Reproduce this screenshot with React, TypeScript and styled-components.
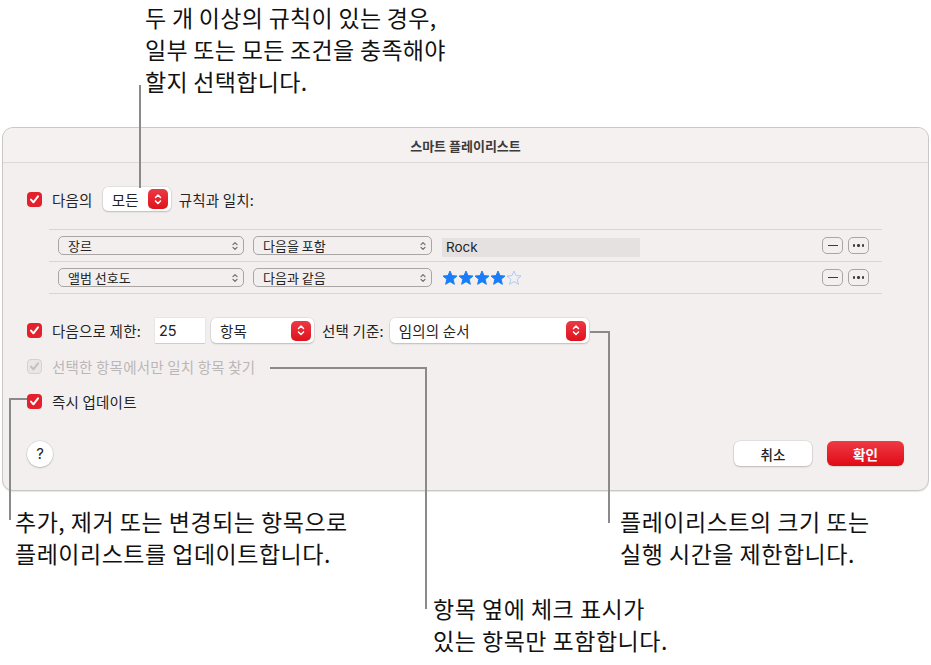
import React from "react";
import styled, { createGlobalStyle } from "styled-components";

const FONT = `"Noto Sans CJK KR", "Noto Sans", sans-serif`;
const LATIN = `Inter, "Noto Sans CJK KR", sans-serif`;
const RED = "#e3202b";

const GlobalStyle = createGlobalStyle`
  html, body {
    margin: 0;
    padding: 0;
    background: #ffffff;
  }
  body {
    font-family: ${FONT};
    color: #1d1d1f;
  }
`;

const Page = styled.div`
  position: relative;
  width: 931px;
  height: 665px;
  overflow: hidden;
  background: #ffffff;
`;

const TopNote = styled.p`
  margin: 0 0 0 145px;
  padding-top: 1px;
  height: 126px;
  font-size: 23px;
  letter-spacing: 0.3px;
  line-height: 32px;
  color: #111;
`;

const Note = styled.p<{ $x: number; $y: number }>`
  position: absolute;
  left: ${(p) => p.$x}px;
  top: ${(p) => p.$y}px;
  margin: 0;
  font-size: 23px;
  letter-spacing: 0.5px;
  line-height: 32px;
  color: #111;
  white-space: nowrap;
`;

const VLine = styled.div<{ $x: number; $y: number; $len: number }>`
  position: absolute;
  left: ${(p) => p.$x}px;
  top: ${(p) => p.$y}px;
  width: 2px;
  height: ${(p) => p.$len}px;
  background: #8a8a8a;
  z-index: 5;
`;

const HLine = styled.div<{ $x: number; $y: number; $len: number }>`
  position: absolute;
  left: ${(p) => p.$x}px;
  top: ${(p) => p.$y}px;
  height: 2px;
  width: ${(p) => p.$len}px;
  background: #8a8a8a;
  z-index: 5;
`;

const Dialog = styled.div`
  margin-left: 2px;
  width: 927px;
  box-sizing: border-box;
  border: 1px solid #cbc7c7;
  border-radius: 11px;
  background: #f4efef;
  box-shadow: 0 1px 1px rgba(0, 0, 0, 0.1);
`;

const TitleBar = styled.div`
  height: 34px;
  border-bottom: 1px solid #ddd8d8;
  display: flex;
  align-items: center;
  justify-content: center;
  font-size: 13px;
  font-weight: 700;
  color: #3b3b3b;
  background: #f6f1f1;
  border-radius: 10px 10px 0 0;
`;

const Body = styled.div`
  padding: 24px 24px 24px 24px;
`;

const Row = styled.div<{ $h: number; $mt?: number }>`
  display: flex;
  align-items: center;
  height: ${(p) => p.$h}px;
  margin-top: ${(p) => p.$mt ?? 0}px;
`;

const Label = styled.span<{ $ml?: number; $muted?: boolean }>`
  font-size: 14.5px;
  letter-spacing: 0.2px;
  margin-left: ${(p) => p.$ml ?? 0}px;
  color: ${(p) => (p.$muted ? "#bab6b6" : "#232323")};
  white-space: nowrap;
`;

const Box = styled.span<{ $disabled?: boolean }>`
  width: 15px;
  height: 15px;
  box-sizing: border-box;
  border-radius: 4px;
  margin-right: 10px;
  flex: none;
  display: flex;
  align-items: center;
  justify-content: center;
  background: ${(p) => (p.$disabled ? "#ebe6e6" : RED)};
  border: ${(p) => (p.$disabled ? "1px solid #d6d1d1" : "none")};
`;

const Checkbox = ({ disabled }: { disabled?: boolean }) => (
  <Box $disabled={disabled}>
    <svg width="11" height="11" viewBox="0 0 11 11">
      <path
        d="M2 5.6 L4.4 8.3 L9 2.4"
        fill="none"
        stroke={disabled ? "#c3bfbf" : "#ffffff"}
        strokeWidth="2"
        strokeLinecap="round"
        strokeLinejoin="round"
      />
    </svg>
  </Box>
);

const Popup = styled.div<{ $w: number; $ml?: number; $h?: number }>`
  width: ${(p) => p.$w}px;
  height: ${(p) => p.$h ?? 25}px;
  margin-left: ${(p) => p.$ml ?? 0}px;
  box-sizing: border-box;
  flex: none;
  display: flex;
  align-items: center;
  justify-content: space-between;
  padding: 0 3px 0 9px;
  background: #ffffff;
  border-radius: 5px;
  box-shadow: 0 0 0 0.5px rgba(0, 0, 0, 0.12), 0 1px 2px rgba(0, 0, 0, 0.16);
  font-size: 14.5px;
  letter-spacing: 0.2px;
  color: #232323;
`;

const Stepper = styled.span`
  width: 20px;
  height: 20px;
  border-radius: 5px;
  background: linear-gradient(#ec3a44, #df111c);
  display: flex;
  align-items: center;
  justify-content: center;
`;

const Chevrons = ({ color, size }: { color: string; size: number }) => (
  <svg width={size} height={size * 1.25} viewBox="0 0 12 15">
    <path
      d="M3 5.5 L6 2.5 L9 5.5 M3 9.5 L6 12.5 L9 9.5"
      fill="none"
      stroke={color}
      strokeWidth="1.8"
      strokeLinecap="round"
      strokeLinejoin="round"
    />
  </svg>
);

const RulesBox = styled.div`
  margin: 18px 0 0 22px;
  width: 833px;
  border-top: 1px solid #d9d4d4;
`;

const RuleRow = styled.div`
  height: 31px;
  border-bottom: 1px solid #d9d4d4;
  display: flex;
  align-items: center;
  padding: 0 13px 0 9px;
`;

const Select = styled.div<{ $w: number; $mr: number }>`
  width: ${(p) => p.$w}px;
  height: 19px;
  margin-right: ${(p) => p.$mr}px;
  box-sizing: border-box;
  flex: none;
  border: 1px solid #a9a5a5;
  border-radius: 5px;
  display: flex;
  align-items: center;
  justify-content: space-between;
  padding: 0 4px 0 9px;
  font-size: 13px;
  color: #232323;
`;

const ValueField = styled.div`
  width: 198px;
  height: 19px;
  margin-top: 3px;
  background: #e6e1e1;
  padding-left: 4px;
  box-sizing: border-box;
  display: flex;
  align-items: center;
  font-family: ${LATIN};
  font-size: 13.5px;
  color: #232323;
`;

const Stars = styled.div`
  display: flex;
  width: 198px;
`;

const Spacer = styled.div`
  flex: 1;
`;

const SmallButton = styled.div<{ $ml?: number }>`
  width: 21px;
  height: 17px;
  margin-left: ${(p) => p.$ml ?? 0}px;
  box-sizing: border-box;
  border: 1px solid #a9a5a5;
  border-radius: 5px;
  display: flex;
  align-items: center;
  justify-content: center;
  gap: 2px;
`;

const Dash = styled.span`
  width: 10px;
  height: 1.5px;
  background: #3a3a3a;
`;

const Dot = styled.span`
  width: 2.5px;
  height: 2.5px;
  border-radius: 50%;
  background: #3a3a3a;
`;

const NumberField = styled.div`
  width: 50px;
  height: 25px;
  margin-left: 14px;
  box-sizing: border-box;
  padding-left: 4px;
  background: #ffffff;
  box-shadow: 0 0 0 0.5px rgba(0, 0, 0, 0.08), 0 1px 0 rgba(0, 0, 0, 0.1);
  display: flex;
  align-items: center;
  font-family: ${LATIN};
  font-size: 14.5px;
  color: #232323;
`;

const Footer = styled.div`
  display: flex;
  align-items: center;
  height: 25px;
  margin-top: 30px;
  gap: 15px;
`;

const Help = styled.div`
  width: 26px;
  height: 26px;
  border-radius: 50%;
  background: #ffffff;
  box-shadow: 0 0 0 0.5px rgba(0, 0, 0, 0.12), 0 1px 2px rgba(0, 0, 0, 0.18);
  display: flex;
  align-items: center;
  justify-content: center;
  font-family: ${LATIN};
  font-size: 15px;
  color: #222;
  margin-right: auto;
`;

const Button = styled.div<{ $primary?: boolean; $w: number }>`
  width: ${(p) => p.$w}px;
  height: 25px;
  border-radius: 6px;
  display: flex;
  align-items: center;
  justify-content: center;
  font-size: 13.5px;
  font-weight: ${(p) => (p.$primary ? 700 : 500)};
  color: ${(p) => (p.$primary ? "#ffffff" : "#222222")};
  background: ${(p) =>
    p.$primary ? "linear-gradient(#ef3a44, #df0b16)" : "#ffffff"};
  box-shadow: ${(p) =>
    p.$primary
      ? "0 1px 1px rgba(0,0,0,0.12)"
      : "0 0 0 0.5px rgba(0,0,0,0.12), 0 1px 2px rgba(0,0,0,0.18)"};
`;

const Star = ({ filled }: { filled: boolean }) => (
  <svg width="16" height="16" viewBox="0 0 24 24">
    <polygon
      points="12,1.5 15,8.4 22.5,9 16.8,14 18.6,21.5 12,17.5 5.4,21.5 7.2,14 1.5,9 9,8.4"
      fill={filled ? "#1a7cf6" : "none"}
      stroke={filled ? "#1a7cf6" : "#a8c8f4"}
      strokeWidth="1.4"
      strokeLinejoin="round"
    />
  </svg>
);

const rating = 4;

export default function App() {
  return (
    <Page>
      <GlobalStyle />
      <TopNote>
        두 개 이상의 규칙이 있는 경우,
        <br />
        일부 또는 모든 조건을 충족해야
        <br />
        할지 선택합니다.
      </TopNote>

      <Dialog>
        <TitleBar>스마트 플레이리스트</TitleBar>
        <Body>
          <Row $h={24}>
            <Checkbox />
            <Label>다음의</Label>
            <Popup $w={68} $ml={10} $h={24}>
              모든
              <Stepper>
                <Chevrons color="#fff" size={10} />
              </Stepper>
            </Popup>
            <Label $ml={8}>규칙과 일치:</Label>
          </Row>

          <RulesBox>
            <RuleRow>
              <Select $w={186} $mr={9}>
                장르
                <Chevrons color="#6f6b6b" size={8} />
              </Select>
              <Select $w={179} $mr={10}>
                다음을 포함
                <Chevrons color="#6f6b6b" size={8} />
              </Select>
              <ValueField>Rock</ValueField>
              <Spacer />
              <SmallButton>
                <Dash />
              </SmallButton>
              <SmallButton $ml={5}>
                <Dot />
                <Dot />
                <Dot />
              </SmallButton>
            </RuleRow>
            <RuleRow>
              <Select $w={186} $mr={9}>
                앨범 선호도
                <Chevrons color="#6f6b6b" size={8} />
              </Select>
              <Select $w={179} $mr={10}>
                다음과 같음
                <Chevrons color="#6f6b6b" size={8} />
              </Select>
              <Stars>
                {[1, 2, 3, 4, 5].map((n) => (
                  <Star key={n} filled={n <= rating} />
                ))}
              </Stars>
              <Spacer />
              <SmallButton>
                <Dash />
              </SmallButton>
              <SmallButton $ml={5}>
                <Dot />
                <Dot />
                <Dot />
              </SmallButton>
            </RuleRow>
          </RulesBox>

          <Row $h={25} $mt={24}>
            <Checkbox />
            <Label>다음으로 제한:</Label>
            <NumberField>25</NumberField>
            <Popup $w={103} $ml={6}>
              항목
              <Stepper>
                <Chevrons color="#fff" size={10} />
              </Stepper>
            </Popup>
            <Label $ml={8}>선택 기준:</Label>
            <Popup $w={199} $ml={6}>
              임의의 순서
              <Stepper>
                <Chevrons color="#fff" size={10} />
              </Stepper>
            </Popup>
          </Row>

          <Row $h={20} $mt={13}>
            <Checkbox disabled />
            <Label $muted>선택한 항목에서만 일치 항목 찾기</Label>
          </Row>

          <Row $h={20} $mt={15}>
            <Checkbox />
            <Label>즉시 업데이트</Label>
          </Row>

          <Footer>
            <Help>?</Help>
            <Button $w={78}>취소</Button>
            <Button $w={77} $primary>
              확인
            </Button>
          </Footer>
        </Body>
      </Dialog>

      <VLine $x={139} $y={85} $len={103} />

      <HLine $x={590} $y={331} $len={19} />
      <VLine $x={608} $y={331} $len={192} />

      <HLine $x={270} $y={367} $len={157} />
      <VLine $x={425} $y={367} $len={242} />

      <HLine $x={9} $y={398} $len={18} />
      <VLine $x={9} $y={398} $len={122} />

      <Note $x={15} $y={505}>
        추가, 제거 또는 변경되는 항목으로
        <br />
        플레이리스트를 업데이트합니다.
      </Note>
      <Note $x={620} $y={505}>
        플레이리스트의 크기 또는
        <br />
        실행 시간을 제한합니다.
      </Note>
      <Note $x={433} $y={592}>
        항목 옆에 체크 표시가
        <br />
        있는 항목만 포함합니다.
      </Note>
    </Page>
  );
}
